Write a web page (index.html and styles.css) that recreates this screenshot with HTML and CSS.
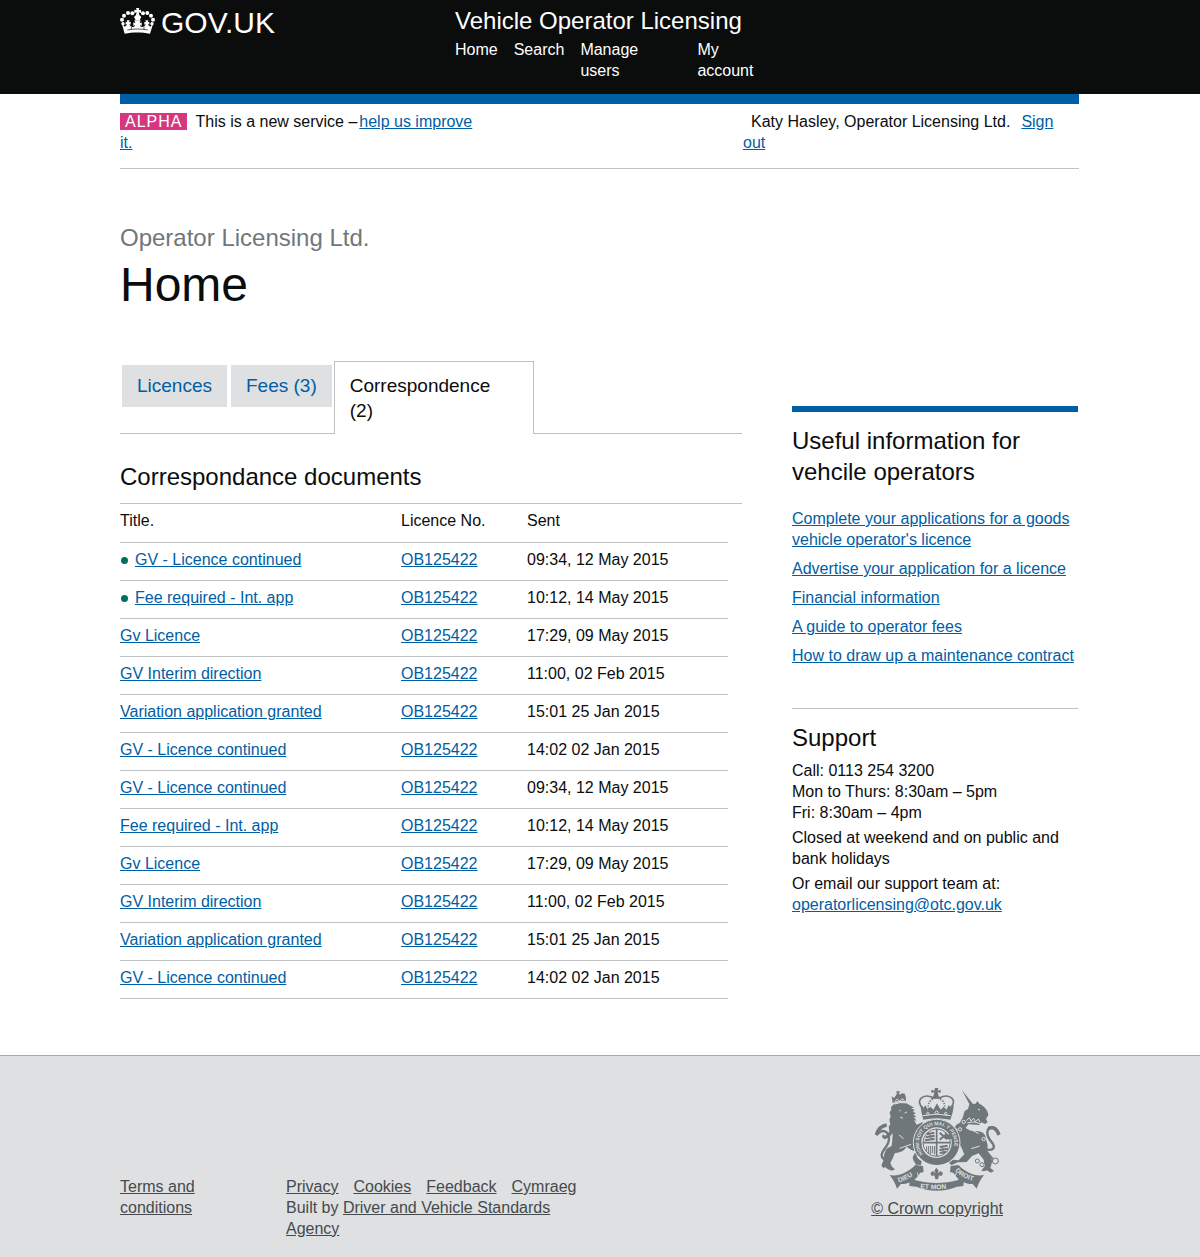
FILE: index.html
```html
<!DOCTYPE html>
<html lang="en">
<head>
<meta charset="utf-8">
<meta name="viewport" content="width=device-width, initial-scale=1">
<title>Home - Vehicle Operator Licensing</title>
<link rel="stylesheet" href="styles.css">
</head>
<body>
<header class="site-header">
  <div class="container header-grid">
    <a class="logo" href="#">
      <svg class="logo-crown" viewBox="0 0 105 81" aria-hidden="true">
        <g fill="#fff">
          <path d="M48 0h10l-2 7 7-2v10l-7-2 2 8 6 6-5 10H47l-5-10 6-6 2-8-7 2V5l7 2z"/>
          <circle cx="37" cy="16" r="6"/><circle cx="24" cy="15" r="6"/><circle cx="12" cy="23" r="6"/><circle cx="6" cy="35" r="6"/><circle cx="9" cy="47" r="5"/>
          <circle cx="69" cy="16" r="6"/><circle cx="82" cy="15" r="6"/><circle cx="93" cy="23" r="6"/><circle cx="99" cy="35" r="6"/><circle cx="96" cy="47" r="5"/>
          <path d="M5 45l9 11c4-2 7-5 7-8l-4 2v-9l5 2-2-6h9l-2 6 5-2v9l-4-2c1 6 6 9 11 9 4 0 6-3 6-6l-5 3V43l6 3-3-9h19l-3 9 6-3v11l-5-3c0 3 2 6 6 6 5 0 10-3 11-9l-4 2v-9l5 2-2-6h9l-2 6 5-2v9l-4-2c0 3 3 6 7 8l9-11-10 32c-23-5-53-5-76 0z"/>
        </g>
        <path d="M22 66c20-4 42-4 61 0M34 56v9M72 56v9" fill="none" stroke="#0b0c0c" stroke-width="2"/>
      </svg>
      <span class="logo-text">GOV.UK</span>
    </a>
    <div>
      <a class="service-name" href="#">Vehicle Operator Licensing</a>
      <nav aria-label="Main">
        <ul class="main-nav">
          <li><a href="#">Home</a></li>
          <li><a href="#">Search</a></li>
          <li class="nav-wide"><a href="#">Manage<br>users</a></li>
          <li><a href="#">My<br>account</a></li>
        </ul>
      </nav>
    </div>
  </div>
</header>

<div class="container">
  <div class="phase-banner">
    <p class="phase-text"><strong class="phase-tag">ALPHA</strong>This is a new service –<a class="feedback-link" href="#">help us improve<br>it.</a></p>
    <p class="user-text">Katy Hasley, Operator Licensing Ltd.<a class="sign-out" href="#">Sign<br>out</a></p>
  </div>

  <main class="content">
    <p class="org-name">Operator Licensing Ltd.</p>
    <h1>Home</h1>

    <div class="columns">
      <div class="primary">
        <nav class="tabs" aria-label="Account sections">
          <a class="tab" href="#">Licences</a>
          <a class="tab" href="#">Fees (3)</a>
          <a class="tab tab-active" href="#" aria-current="page">Correspondence (2)</a>
        </nav>

        <h2 class="table-heading">Correspondance documents</h2>
        <table class="documents">
          <colgroup><col class="col-title"><col class="col-licence"><col class="col-sent"></colgroup>
          <thead>
            <tr><th scope="col">Title.</th><th scope="col">Licence No.</th><th scope="col">Sent</th></tr>
          </thead>
          <tbody>
            <tr><td><a class="unread" href="#">GV - Licence continued</a></td><td><a href="#">OB125422</a></td><td>09:34, 12 May 2015</td></tr>
            <tr><td><a class="unread" href="#">Fee required - Int. app</a></td><td><a href="#">OB125422</a></td><td>10:12, 14 May 2015</td></tr>
            <tr><td><a href="#">Gv Licence</a></td><td><a href="#">OB125422</a></td><td>17:29, 09 May 2015</td></tr>
            <tr><td><a href="#">GV Interim direction</a></td><td><a href="#">OB125422</a></td><td>11:00, 02 Feb 2015</td></tr>
            <tr><td><a href="#">Variation application granted</a></td><td><a href="#">OB125422</a></td><td>15:01 25 Jan 2015</td></tr>
            <tr><td><a href="#">GV - Licence continued</a></td><td><a href="#">OB125422</a></td><td>14:02 02 Jan 2015</td></tr>
            <tr><td><a href="#">GV - Licence continued</a></td><td><a href="#">OB125422</a></td><td>09:34, 12 May 2015</td></tr>
            <tr><td><a href="#">Fee required - Int. app</a></td><td><a href="#">OB125422</a></td><td>10:12, 14 May 2015</td></tr>
            <tr><td><a href="#">Gv Licence</a></td><td><a href="#">OB125422</a></td><td>17:29, 09 May 2015</td></tr>
            <tr><td><a href="#">GV Interim direction</a></td><td><a href="#">OB125422</a></td><td>11:00, 02 Feb 2015</td></tr>
            <tr><td><a href="#">Variation application granted</a></td><td><a href="#">OB125422</a></td><td>15:01 25 Jan 2015</td></tr>
            <tr><td><a href="#">GV - Licence continued</a></td><td><a href="#">OB125422</a></td><td>14:02 02 Jan 2015</td></tr>
          </tbody>
        </table>
      </div>

      <aside class="sidebar">
        <section class="useful">
          <h2>Useful information for vehcile operators</h2>
          <ul class="link-list">
            <li><a href="#">Complete your applications for a goods vehicle operator's licence</a></li>
            <li><a href="#">Advertise your application for a licence</a></li>
            <li><a href="#">Financial information</a></li>
            <li><a href="#">A guide to operator fees</a></li>
            <li><a href="#">How to draw up a maintenance contract</a></li>
          </ul>
        </section>
        <section class="support">
          <h2>Support</h2>
          <p>Call: 0113 254 3200<br>Mon to Thurs: 8:30am – 5pm<br>Fri: 8:30am – 4pm</p>
          <p>Closed at weekend and on public and bank holidays</p>
          <p>Or email our support team at:<br><a href="#">operatorlicensing@otc.gov.uk</a></p>
        </section>
      </aside>
    </div>
  </main>
</div>

<footer class="site-footer">
  <div class="container footer-grid">
    <a class="terms" href="#">Terms and conditions</a>
    <div class="footer-meta">
      <ul class="footer-links">
        <li><a href="#">Privacy</a></li>
        <li><a href="#">Cookies</a></li>
        <li><a href="#">Feedback</a></li>
        <li><a href="#">Cymraeg</a></li>
      </ul>
      <p>Built by <a href="#">Driver and Vehicle Standards Agency</a></p>
    </div>
    <a class="copyright" href="#">
      <svg class="crest" viewBox="38 18 384 315" aria-hidden="true">
        <defs>
          <path id="garter" d="M188 222A53 53 0 1 1 270 222"/>
          <path id="dieu" d="M115 307Q145 300 172 273"/>
          <path id="etmon" d="M180 325Q229 331 285 323"/>
          <path id="droit" d="M284 273Q308 297 348 305"/>
        </defs>
        <g fill="#6f777b">
          <!-- lion -->
          <path d="M97 69l-3-20 7 5 5-7 3-5 2-4h-3v-4h10v4h-3l3 6 7-4 8 1 3 8 1 14c-15-2-27 0-40 6z"/>
          <path d="M101 73c8-5 25-8 35-5l6 4 12 7 7 4-8 2 11 6-7 2 10 8-8 1 9 10-8-1 9 11-8-1 8 13c9-3 16-9 19-7l-2 6 5 1-7 6 4 4-8 3-7 12-9 8c10 6 18 12 20 26l-3 20c-4 5-8 12-12 17l9 10 6 3-2 12-15-1-8-13-2-9 9-18c-10-2-19-7-27-14-8 14-21 17-36 20l-5 13-8 16 5 11 9 8-9 4-12-4-9-7-5 4-6-9 5-11 4-23 6-15 16-10 2-16 1-22-9 11-7 5-9 3-7-7 2-8 8 4 12-12-2-15 5-8-3-13 4-9-3-13 5-8-1-8z"/>
          <!-- unicorn -->
          <path d="M305 31l33 41 8-1 5-8 6 8c14 7 26 19 27 34l-7 12 5 10-8 5-10-5-8 8-32-2-8 11 15 8 22 2c14 1 23 8 24 24l5 18-1 16 13 17 1 17-5 18 11 9-10 5-11-7-9 3-8-2 11-15-4-18-15-19-20 8-16 18-27 1-19 9-9-10 14-7 17 2 17-18-9-21-8-13-21-12-12 1-12-6-3-7 11 2-6-11 13 8 8-11 8 5 12-8-9-8 4-8 10-5 9-16 6-20 10-6 4-15z"/>
          <!-- crown -->
          <path d="M224 24h10l-2 8 9-3v10l-9-3 3 13 9 7h-34l9-7 3-13-9 3V29l9 3z"/>
          <path d="M184 100l-4-24 9 7 7-7 6 13 8-9 9 9 8-13 3-6 3 6 8 13 9-9 8 9 7-13 7 7 9-7-5 25-6 18c-27-6-54-6-81 0z"/>
          <!-- garter -->
          <path fill-rule="evenodd" d="M229 117a69 69 0 1 0 1 0zM229 142a46 46 0 1 1-1 0z"/>
          <!-- scrolls -->
          <path d="M88 285C112 290 140 280 165 255L188 258 190 276 180 278C165 302 145 312 122 312L110 326C106 312 98 298 88 285zM371 285C347 290 319 280 294 255L271 258 269 276 279 278C294 302 314 312 337 312L349 326C353 312 361 298 371 285z"/>
          <path d="M160 278L163 300C205 312 252 312 294 300L298 278 312 284 309 318 290 320C250 336 208 336 168 320L147 318 148 282z"/>
          <path d="M228 263l7 9-3 9 8-8 8 6-4 9-8-2-3 12h-8l-3-12-8 2-4-9 8-6 8 8-4-9z"/>
        </g>
        <g fill="none" stroke="#6f777b">
          <path stroke-width="7" d="M92 241c-20 0-28-5-28-15 0-16 22-27 22-50 0-22-20-33-38-10"/>
          <path stroke-width="10" d="M48 164c5-18 14-26 31-29"/>
          <path stroke-width="7" d="M374 207c22 7 31-2 24-15-9-13-18-18-17-36 2-16 23-24 36 6"/>
          <path stroke-width="10" d="M384 145c14-5 23-1 32 20"/>
          <g stroke-width="5"><path d="M187 83c-23-19-2-46 34-29M270 83c23-19 2-46-34-29"/><path stroke-dasharray="4 4" d="M205 88c-4-17 3-28 20-35M252 88c4-17-3-28-20-35"/></g>
          <g stroke-width="3"><circle cx="351" cy="243" r="6"/><circle cx="365" cy="254" r="6"/><circle cx="380" cy="247" r="7"/><circle cx="391" cy="237" r="7"/><circle cx="405" cy="243" r="9"/></g>
          <circle cx="229" cy="188" r="41" stroke-width="3"/>
          <path stroke-width="5" d="M229 147v82M188 188h82"/>
          <path stroke-width="6" d="M199 163l23-5M196 172l27-5M194 181l29-5M238 158l22 20M260 161l-22 18M238 201l24-4M237 210l26-4M238 219l20-4"/>
          <path stroke-width="3" d="M199 199v15M205 198v22M211 198v24M217 198v22M223 198v25M204 156l13 25M246 197l4 26"/>
        </g>
        <g fill="none" stroke="#dee0e2" stroke-width="3">
          <path d="M103 72q17-7 35-3M103 65l8-8 7 7 7-8 7 5M133 99l7-3M121 93l-5-3M119 111l9 4M118 205l34-12M116 165l14 11M318 122l9-9 5 10 8-8 5 10 9-8 5 9M321 128q17-6 40 3M353 88l6 2M336 151l19 10M333 206l25-8"/>
          <path d="M187 107q41-9 84 0M202 96l-4 6 4 3 5-4zM229 92l-6 6 6 4 6-4zM256 96l-4 6 5 3 4-4z"/>
          <circle cx="310" cy="126" r="5"/><circle cx="299" cy="148" r="5"/><circle cx="370" cy="177" r="5"/>
          <circle cx="229" cy="188" r="70"/>
          <path d="M171 278l5 16M288 278l-6 16"/>
        </g>
        <g class="crest-motto">
          <text class="crest-garter"><textPath href="#garter">HONI SOIT QUI MAL Y PENSE</textPath></text>
          <text><textPath href="#dieu">DIEU</textPath></text>
          <text><textPath href="#etmon">ET MON</textPath></text>
          <text><textPath href="#droit">DROIT</textPath></text>
        </g>
      </svg>
      <span>© Crown copyright</span>
    </a>
  </div>
</footer>
</body>
</html>
```
FILE: styles.css
```css
* { box-sizing: border-box; }

body {
  margin: 0;
  font-family: "Liberation Sans", Arial, Helvetica, sans-serif;
  font-size: 16px;
  line-height: 21px;
  color: #0b0c0c;
  background: #fff;
}

h1, h2, p, ul { margin: 0; padding: 0; font-weight: 400; }
ul { list-style: none; }
a { color: #005ea5; }

.container { max-width: 960px; margin: 0 auto; padding-right: 1px; }

/* Header */
.site-header { background: #0b0c0c; padding: 6px 0 13px; }
.site-header a { color: #fff; text-decoration: none; }
.header-grid { display: grid; grid-template-columns: 335px 1fr; }
.logo { display: flex; align-items: flex-start; gap: 6px; height: 30px; }
.logo-crown { width: 35px; height: 27px; margin-top: 2px; }
.logo-text { font-size: 30px; line-height: 33px; }
.service-name { display: block; font-size: 24px; line-height: 30px; }
.main-nav { display: flex; gap: 16px; padding-top: 3px; }
.nav-wide { width: 101px; }

/* Phase banner */
.phase-banner {
  display: flex;
  justify-content: space-between;
  padding: 7px 0 15px;
  border-top: 10px solid #005ea5;
  border-bottom: 1px solid #bfc1c3;
}
.phase-tag {
  display: inline-block;
  margin-right: 8px;
  padding: 0 5px;
  font-weight: 400;
  line-height: 17px;
  letter-spacing: 1px;
  color: #fff;
  background: #d53880;
}
.feedback-link { margin-left: 2px; }
.user-text { width: 336px; text-indent: 8px; }
.sign-out { margin-left: 11px; }

/* Page content */
.content { padding: 54px 0 56px; }
.org-name { font-size: 24px; line-height: 30px; color: #6f777b; }
h1 { font-size: 48px; line-height: 50px; padding-top: 7px; }
h2 { font-size: 24px; line-height: 31px; }
.columns {
  display: grid;
  grid-template-columns: 1fr 287px;
  gap: 50px;
  margin-top: 51px;
}

/* Tabs */
.tabs {
  display: flex;
  align-items: flex-start;
  gap: 4px;
  padding-left: 2px;
  border-bottom: 1px solid #bfc1c3;
}
.tab {
  margin-top: 4px;
  padding: 8px 15px 9px;
  font-size: 19px;
  line-height: 25px;
  text-decoration: none;
  background: #dee0e2;
}
.tab-active {
  width: 200px;
  margin: 0 0 -1px -2px;
  padding: 11px 15px;
  color: #0b0c0c;
  background: #fff;
  border: 1px solid #bfc1c3;
  border-bottom: 0;
}

/* Documents table */
.table-heading {
  padding: 27px 0 11px;
  border-bottom: 1px solid #bfc1c3;
}
.documents { width: 608px; max-width: 100%; border-collapse: separate; border-spacing: 0; table-layout: fixed; }
.col-title { width: 281px; }
.col-licence { width: 126px; }
.documents th, .documents td {
  padding: 6px 0 10px;
  text-align: left;
  font-weight: 400;
  border-bottom: 1px solid #bfc1c3;
}
.documents th { padding-bottom: 11px; }
.unread { position: relative; margin-left: 15px; }
.unread::before {
  content: "";
  position: absolute;
  left: -14px;
  top: 6px;
  width: 7px;
  height: 7px;
  border-radius: 50%;
  background: #00705a;
}

/* Sidebar */
.sidebar { padding: 45px 1px 0 0; }
.useful { border-top: 6px solid #005ea5; padding-top: 13px; }
.link-list { display: grid; gap: 8px; margin: 21px 0 42px; }
.support { border-top: 1px solid #bfc1c3; padding-top: 13px; }
.support h2 { margin-bottom: 7px; }
.support p { margin-bottom: 4px; }

/* Footer */
.site-footer {
  padding: 30px 0 18px;
  color: #454a4c;
  background: #dee0e2;
  border-top: 1px solid #a1acb2;
}
.site-footer a { color: #454a4c; }
.footer-grid { display: grid; grid-template-columns: 90px 294px 1fr; column-gap: 76px; }
.terms, .footer-meta { padding-top: 90px; }
.footer-links { display: flex; gap: 15px; }
.copyright { display: flex; flex-direction: column; align-items: center; justify-self: end; margin-right: 76px; }
.crest { width: 128px; height: 105px; margin-bottom: 7px; }
.crest-motto { font-size: 20px; font-weight: 700; fill: #dee0e2; }
.crest-garter { font-size: 15px; }
```
